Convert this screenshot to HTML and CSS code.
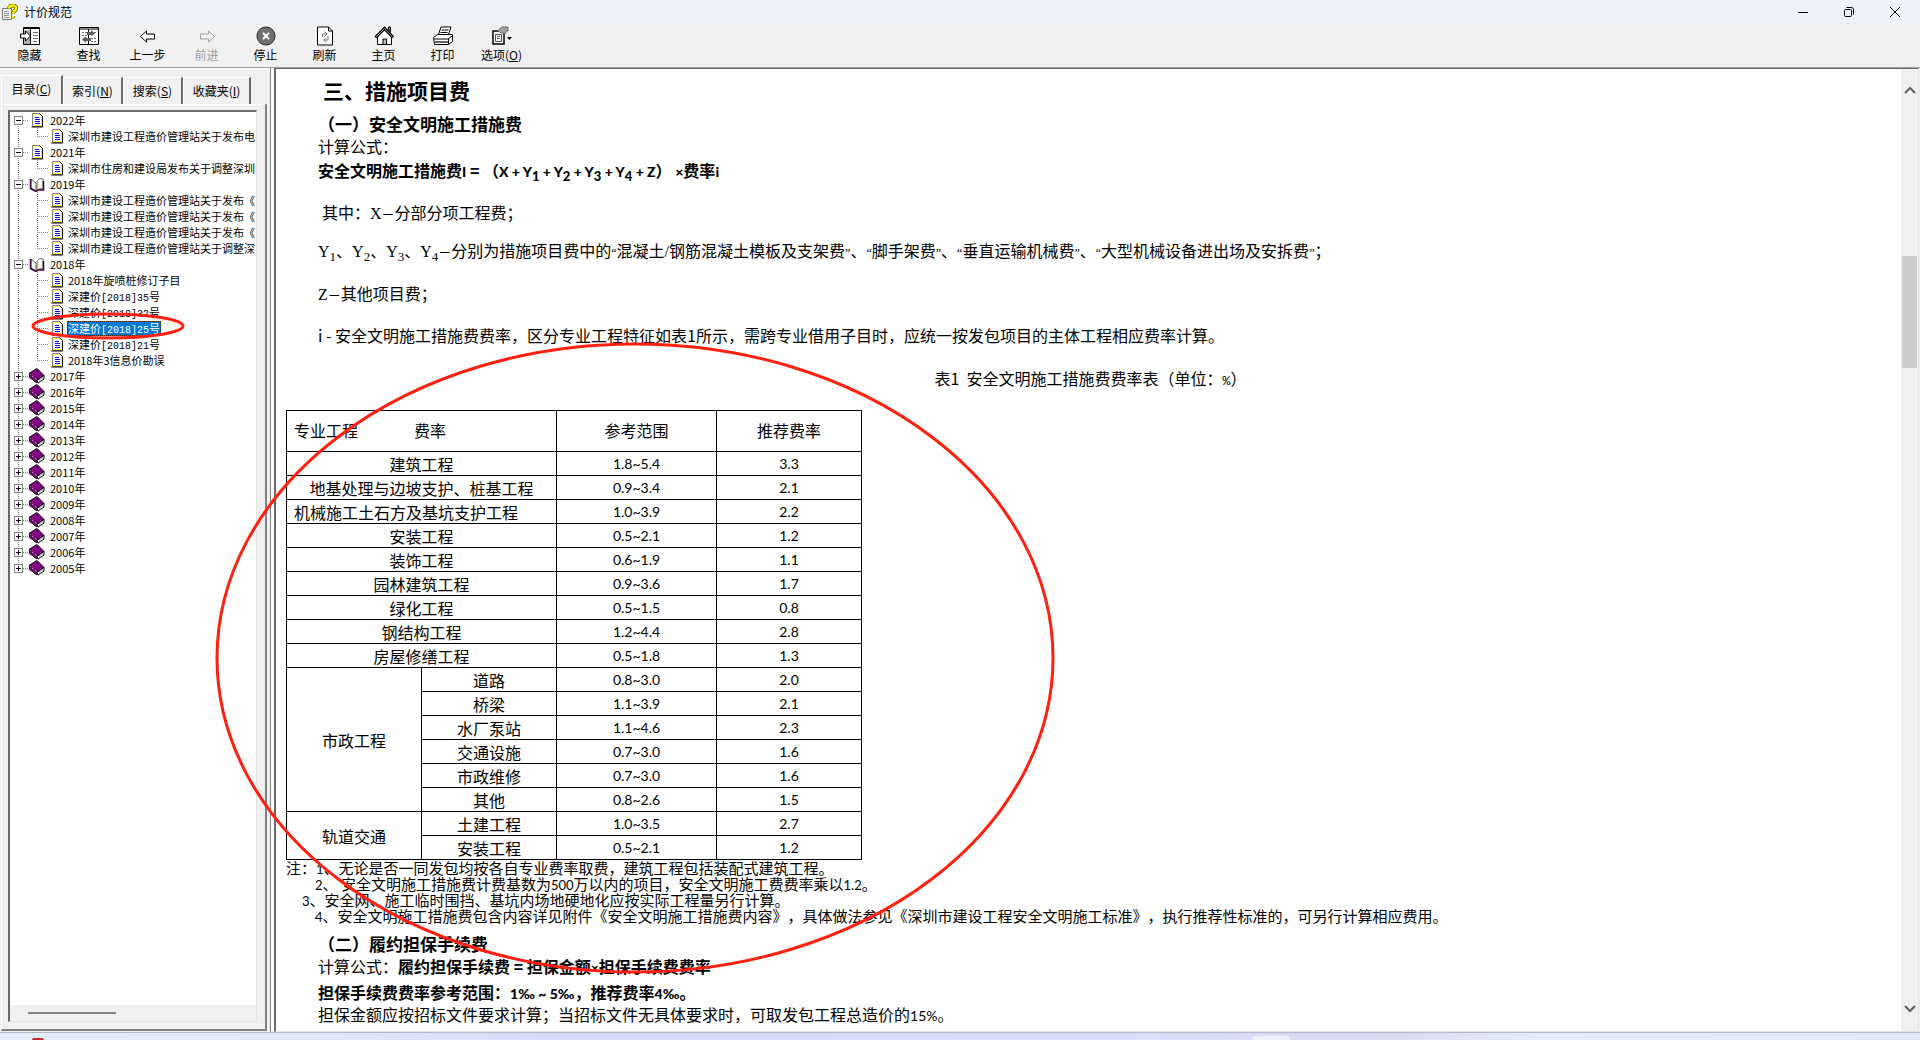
FILE: index.html
```html
<!DOCTYPE html>
<html lang="zh-CN">
<head>
<meta charset="utf-8">
<title>计价规范</title>
<link rel="stylesheet" href="styles.css">
</head>
<body>
<svg class="sprite" aria-hidden="true">
  <symbol id="page" viewBox="0 0 16 16">
    <path d="M3.500 1.500h7l3 3v10h-10z" fill="#fff" stroke="#808080"/>
    <path d="M4.500 2.500h6l2 2v9h-8z" fill="none" stroke="#ffff40"/>
    <path d="M10.500 1.500l3 3v10.500h-11" fill="none" stroke="#000"/>
    <path d="M6 5.500h4M6 7.500h5M6 9.500h5M6 11.500h5" stroke="#0000e0"/>
  </symbol>
  <symbol id="open" viewBox="0 0 16 16">
    <path d="M2 3l5 4v8l-5-3z" fill="#fff" stroke="#606060"/>
    <path d="M8 6c1-3 3-4 6-3v10c-3-1-5 0-6 2z" fill="#fff" stroke="#606060"/>
    <path d="M9.500 6v6M12.500 5v7" stroke="#f0e860" stroke-dasharray="1 1"/>
    <path d="M1.500 3v9.500L7 15.500l2-1.500h5.500V5" fill="none" stroke="#400040" stroke-width="1.500"/>
  </symbol>
  <symbol id="book" viewBox="0 0 16 16">
    <path d="M0 5.500L8 .5l7 7-7 5z" fill="#800080" stroke="#000"/>
    <path d="M8 12.500l7-5v3.500l-6 4z" fill="#fff" stroke="#000"/>
    <path d="M0 5.500v3.500l8 6v-3z" fill="#800080" stroke="#000"/>
    <path d="M1.500 6.500l7 6" stroke="#fff" stroke-dasharray="1 1"/>
    <path d="M10 12.500l4-2.500M10 14l4-2.500" stroke="#808080" stroke-dasharray="1 1"/>
  </symbol>
</svg>

<div class="app">
  <header class="titlebar">
    <svg class="app-icon" viewBox="0 0 16 16"><path d="M.5 4.500h9v11h-9z" fill="#fff" stroke="#707070"/><path d="M2 7.500h5M2 9.500h5M2 11.500h5M2 13.500h5" stroke="#909090"/><path d="M7 4.500C7 .5 14.500.5 14 4.500c0 2.500-3 2-3 5M11 12v2.500" fill="none" stroke="#606000" stroke-width="4"/><path d="M7 4.500C7 .5 14.500.5 14 4.500c0 2.500-3 2-3 5M11 12v2.500" fill="none" stroke="#ffee00" stroke-width="2.500"/></svg>
    <h1>计价规范</h1>
    <div class="window-buttons">
      <button aria-label="最小化"><svg viewBox="0 0 10 10"><path d="M0 5.500h10"/></svg></button>
      <button aria-label="还原"><svg viewBox="0 0 10 10"><rect x=".5" y="2.500" width="7" height="7" rx="1"/><path d="M2.500.5h5q2 0 2 2v5"/></svg></button>
      <button aria-label="关闭"><svg viewBox="0 0 10 10"><path d="M0 0l10 10M10 0L0 10"/></svg></button>
    </div>
  </header>

  <nav class="toolbar">
    <button><svg viewBox="0 0 20 20"><path d="M3.500 1.500h16v17h-16z" fill="#fff" stroke="#000"/><path d="M4 4h6v14H4z" fill="#b0b0b0"/><path d="M3 2.500h17M10.500 3v16" stroke="#000"/><path d="M13 6.500h5M13 9.500h5M13 12.500h5M13 15.500h4" stroke="#707070"/><path d="M.5 8h5V5l5 5-5 5v-3h-5z" fill="#fff" stroke="#000"/></svg>隐藏</button>
    <button><svg viewBox="0 0 20 20"><path d="M.5 1.500h19v17H.5z" fill="#fff" stroke="#000"/><path d="M0 3h20M9.500 3v16" stroke="#000"/><path d="M3 6.500h5M3 9.500h5M12 12.500h6M12 15.500h5M12 6.500h6" stroke="#707070" stroke-dasharray="2 1"/><path d="M8 6h4V4l4 3.500-4 3V9H8zM12 12H7v-2l-4 3.500L7 17v-2h5z" fill="#606060"/></svg>查找</button>
    <button><svg viewBox="0 0 20 20"><path d="M2.500 10.500l6-5.500v3h8v5h-8v3z" fill="#fff" stroke="#000"/></svg>上一步</button>
    <button disabled><svg viewBox="0 0 20 20"><path d="M17.500 10.500l-6-5.500v3h-8v5h8v3z" fill="#f4f4f4" stroke="#a0a0a0"/></svg>前进</button>
    <button><svg viewBox="0 0 20 20"><circle cx="10" cy="10" r="9" fill="#707070" stroke="#202020"/><path d="M7 7l6 6M13 7l-6 6" stroke="#fff" stroke-width="2"/></svg>停止</button>
    <button><svg viewBox="0 0 20 20"><path d="M2.500 1h11l4 4v14h-15z" fill="#fff" stroke="#000"/><path d="M13.500 1v4h4" fill="none" stroke="#000"/><path d="M7.500 11V8h4M9.500 5.500L12 8l-2.500 2.500M13 10v4H9M11 11.500L8.500 14l2.500 2.500" fill="none" stroke="#707070"/></svg>刷新</button>
    <button><svg viewBox="0 0 20 20"><path d="M14.500 6V1h2v8" fill="#808080" stroke="#000"/><path d="M3.500 10v8.500h14V10L10 3z" fill="#fff" stroke="#000"/><path d="M1.500 11.500L10.500 2.500l8.500 9" fill="none" stroke="#000" stroke-width="3"/><path d="M2 11l8.500-8.500L18.500 11" fill="none" stroke="#a0a0a0"/><path d="M9 18v-5h3.500v5" fill="#bbb" stroke="#000"/></svg>主页</button>
    <button><svg viewBox="0 0 20 20"><path d="M5 10l3-9h10l-3 9z" fill="#fff" stroke="#000"/><path d="M8.500 4h7M7.500 6.500h7M7 8.500h6" stroke="#000"/><path d="M.5 11.500l4-3h15v7l-4 3H1.500z" fill="#fff" stroke="#000"/><path d="M1 13h14l4-3M15.500 13v5" fill="none" stroke="#000"/><path d="M2 16h13" stroke="#606060" stroke-width="2"/></svg>打印</button>
    <button><svg viewBox="0 0 20 20"><path d="M1 5h11v13H1z" fill="#fff" stroke="#000" stroke-width="1.500"/><path d="M3.500 8.500h6v7h-6zM5 10.500h3M5 12.500h3" fill="none" stroke="#505050"/><path d="M5 5l5-4h6v4l-4 3z" fill="#a0a0a0" stroke="#404040" stroke-dasharray="2 1"/><path d="M15 11h5l-2.500 3z" fill="#000"/></svg><span>选项(<u>O</u>)</span></button>
  </nav>

  <main class="workspace">
    <aside class="side">
      <div class="tabs">
        <button class="active">目录(<u>C</u>)</button><button>索引(<u>N</u>)</button><button>搜索(<u>S</u>)</button><button>收藏夹(<u>I</u>)</button>
      </div>
      <div class="tab-page">
        <div class="tree-box">
          <ul class="tree">
            <li><div class="row"><button aria-label="折叠"></button><i></i><svg><use href="#page"/></svg><span>2022年</span></div>
              <ul><li class="row"><i></i><svg><use href="#page"/></svg><span>深圳市建设工程造价管理站关于发布电</span></li></ul></li>
            <li><div class="row"><button aria-label="折叠"></button><i></i><svg><use href="#page"/></svg><span>2021年</span></div>
              <ul><li class="row"><i></i><svg><use href="#page"/></svg><span>深圳市住房和建设局发布关于调整深圳</span></li></ul></li>
            <li><div class="row"><button aria-label="折叠"></button><i></i><svg><use href="#open"/></svg><span>2019年</span></div>
              <ul>
                <li class="row"><i></i><svg><use href="#page"/></svg><span>深圳市建设工程造价管理站关于发布《</span></li>
                <li class="row"><i></i><svg><use href="#page"/></svg><span>深圳市建设工程造价管理站关于发布《</span></li>
                <li class="row"><i></i><svg><use href="#page"/></svg><span>深圳市建设工程造价管理站关于发布《</span></li>
                <li class="row"><i></i><svg><use href="#page"/></svg><span>深圳市建设工程造价管理站关于调整深</span></li>
              </ul></li>
            <li><div class="row"><button aria-label="折叠"></button><i></i><svg><use href="#open"/></svg><span>2018年</span></div>
              <ul>
                <li class="row"><i></i><svg><use href="#page"/></svg><span>2018年旋喷桩修订子目</span></li>
                <li class="row"><i></i><svg><use href="#page"/></svg><span>深建价<code>[2018]35</code>号</span></li>
                <li class="row"><i></i><svg><use href="#page"/></svg><span>深建价<code>[2018]32</code>号</span></li>
                <li class="row"><i></i><svg><use href="#page"/></svg><span class="selected">深建价<code>[2018]25</code>号</span></li>
                <li class="row"><i></i><svg><use href="#page"/></svg><span>深建价<code>[2018]21</code>号</span></li>
                <li class="row"><i></i><svg><use href="#page"/></svg><span>2018年3信息价勘误</span></li>
              </ul></li>
            <li class="row"><button class="closed" aria-label="展开"></button><i></i><svg><use href="#book"/></svg><span>2017年</span></li>
            <li class="row"><button class="closed" aria-label="展开"></button><i></i><svg><use href="#book"/></svg><span>2016年</span></li>
            <li class="row"><button class="closed" aria-label="展开"></button><i></i><svg><use href="#book"/></svg><span>2015年</span></li>
            <li class="row"><button class="closed" aria-label="展开"></button><i></i><svg><use href="#book"/></svg><span>2014年</span></li>
            <li class="row"><button class="closed" aria-label="展开"></button><i></i><svg><use href="#book"/></svg><span>2013年</span></li>
            <li class="row"><button class="closed" aria-label="展开"></button><i></i><svg><use href="#book"/></svg><span>2012年</span></li>
            <li class="row"><button class="closed" aria-label="展开"></button><i></i><svg><use href="#book"/></svg><span>2011年</span></li>
            <li class="row"><button class="closed" aria-label="展开"></button><i></i><svg><use href="#book"/></svg><span>2010年</span></li>
            <li class="row"><button class="closed" aria-label="展开"></button><i></i><svg><use href="#book"/></svg><span>2009年</span></li>
            <li class="row"><button class="closed" aria-label="展开"></button><i></i><svg><use href="#book"/></svg><span>2008年</span></li>
            <li class="row"><button class="closed" aria-label="展开"></button><i></i><svg><use href="#book"/></svg><span>2007年</span></li>
            <li class="row"><button class="closed" aria-label="展开"></button><i></i><svg><use href="#book"/></svg><span>2006年</span></li>
            <li class="row"><button class="closed" aria-label="展开"></button><i></i><svg><use href="#book"/></svg><span>2005年</span></li>
          </ul>
          <div class="hscroll"><div class="hthumb"></div></div>
        </div>
      </div>
    </aside>
    <div class="splitter"></div>
    <section class="viewer">
      <article class="doc">
        <h2>三、措施项目费</h2>
        <h3>（一）安全文明施工措施费</h3>
        <p class="song">计算公式：</p>
        <p class="formula">安全文明施工措施费<b class="lat">I</b> =&nbsp;（<b class="lat">X + Y<sub>1</sub> + Y<sub>2</sub> + Y<sub>3</sub> + Y<sub>4</sub> + Z</b>）&nbsp;<b class="lat">×</b>费率<b class="lat">i</b></p>
        <p class="song where">&nbsp;其中：X<span class="dash">－</span>分部分项工程费；</p>
        <p class="song ydef">Y<sub>1</sub>、Y<sub>2</sub>、Y<sub>3</sub>、Y<sub>4</sub><span class="dash">－</span>分别为措施项目费中的<span class="quote">“</span>混凝土/钢筋混凝土模板及支架费<span class="quote">”</span>、<span class="quote">“</span>脚手架费<span class="quote">”</span>、<span class="quote">“</span>垂直运输机械费<span class="quote">”</span>、<span class="quote">“</span>大型机械设备进出场及安拆费<span class="quote">”</span>；</p>
        <p class="song zdef">Z<span class="dash">－</span>其他项目费；</p>
        <p class="idef">i - 安全文明施工措施费费率，区分专业工程特征如表1所示，需跨专业借用子目时，应统一按发包项目的主体工程相应费率计算。</p>
        <p class="caption" id="cap">表1&nbsp; 安全文明施工措施费费率表（单位：<span class="percent">%</span>）</p>
        <table class="rates" aria-labelledby="cap">
          <colgroup><col class="c1"><col class="c1"><col class="c2"><col class="c3"></colgroup>
          <tr class="head"><th colspan="2"><div class="split-head"><span>专业工程</span><span>费率</span></div></th><th>参考范围</th><th>推荐费率</th></tr>
          <tr><td colspan="2">建筑工程</td><td class="num">1.8~5.4</td><td class="num">3.3</td></tr>
          <tr><td colspan="2">地基处理与边坡支护、桩基工程</td><td class="num">0.9~3.4</td><td class="num">2.1</td></tr>
          <tr><td colspan="2" class="left">机械施工土石方及基坑支护工程</td><td class="num">1.0~3.9</td><td class="num">2.2</td></tr>
          <tr><td colspan="2">安装工程</td><td class="num">0.5~2.1</td><td class="num">1.2</td></tr>
          <tr><td colspan="2">装饰工程</td><td class="num">0.6~1.9</td><td class="num">1.1</td></tr>
          <tr><td colspan="2">园林建筑工程</td><td class="num">0.9~3.6</td><td class="num">1.7</td></tr>
          <tr><td colspan="2">绿化工程</td><td class="num">0.5~1.5</td><td class="num">0.8</td></tr>
          <tr><td colspan="2">钢结构工程</td><td class="num">1.2~4.4</td><td class="num">2.8</td></tr>
          <tr><td colspan="2">房屋修缮工程</td><td class="num">0.5~1.8</td><td class="num">1.3</td></tr>
          <tr><td rowspan="6">市政工程</td><td>道路</td><td class="num">0.8~3.0</td><td class="num">2.0</td></tr>
          <tr><td>桥梁</td><td class="num">1.1~3.9</td><td class="num">2.1</td></tr>
          <tr><td>水厂泵站</td><td class="num">1.1~4.6</td><td class="num">2.3</td></tr>
          <tr><td>交通设施</td><td class="num">0.7~3.0</td><td class="num">1.6</td></tr>
          <tr><td>市政维修</td><td class="num">0.7~3.0</td><td class="num">1.6</td></tr>
          <tr><td>其他</td><td class="num">0.8~2.6</td><td class="num">1.5</td></tr>
          <tr><td rowspan="2">轨道交通</td><td>土建工程</td><td class="num">1.0~3.5</td><td class="num">2.7</td></tr>
          <tr><td>安装工程</td><td class="num">0.5~2.1</td><td class="num">1.2</td></tr>
        </table>
        <div class="notes">
          <p>注：<span class="lat">1</span>、无论是否一同发包均按各自专业费率取费，建筑工程包括装配式建筑工程。</p>
          <p class="in2"><span class="lat">2</span>、&nbsp;安全文明施工措施费计费基数为<span class="lat">500</span>万以内的项目，安全文明施工费费率乘以<span class="lat">1.2</span>。</p>
          <p class="in1"><span class="lat">3</span>、安全网、施工临时围挡、基坑内场地硬地化应按实际工程量另行计算。</p>
          <p class="in2"><span class="lat">4</span>、安全文明施工措施费包含内容详见附件《安全文明施工措施费内容》，具体做法参见《深圳市建设工程安全文明施工标准》，执行推荐性标准的，可另行计算相应费用。</p>
        </div>
        <h3>（二）履约担保手续费</h3>
        <p class="song">计算公式：<b class="yahei">履约担保手续费 = 担保金额<span class="lat">×</span>担保手续费费率</b></p>
        <p class="bold">担保手续费费率参考范围：<b class="lat">1‰ ~ 5‰</b>，推荐费率<b class="lat">4‰</b>。</p>
        <p class="song">担保金额应按招标文件要求计算；当招标文件无具体要求时，可取发包工程总造价的<span class="lat">15%</span>。</p>
      </article>
      <div class="vscroll">
        <svg class="up" viewBox="0 0 12 10"><path d="M1 8l5-5 5 5"/></svg>
        <div class="vthumb"></div>
        <svg class="down" viewBox="0 0 12 10"><path d="M1 2l5 5 5-5"/></svg>
      </div>
    </section>
  </main>
  <footer class="taskbar"><span class="badge"></span><span class="task"></span></footer>
</div>
<svg class="marks" aria-hidden="true"><ellipse cx="108" cy="326" rx="75" ry="12"/><ellipse cx="635" cy="658" rx="418" ry="314"/></svg>
</body>
</html>
```
FILE: styles.css
```css
* { box-sizing: border-box; }
body, h1, h2, h3, p, ul { margin: 0; padding: 0; }
body { font-family: "Noto Sans CJK SC", sans-serif; font-size: 12px; color: #000; overflow: hidden; text-spacing-trim: space-all; }
button { font: inherit; color: inherit; background: none; border: 0; padding: 0; }
ul { list-style: none; }
.sprite { display: none; }
.app { display: flex; flex-direction: column; height: 100vh; background: #f0f0f0; }

.titlebar { display: flex; align-items: center; height: 23px; background: #eef3fb; padding-left: 2px; flex: none; }
.app-icon { width: 16px; height: 16px; margin-right: 6px; }
.titlebar h1 { font-size: 12px; font-weight: 400; line-height: 20px; }
.window-buttons { display: flex; margin-left: auto; padding-right: 2px; height: 100%; }
.window-buttons button { width: 46px; display: flex; align-items: center; justify-content: center; }
.window-buttons svg { width: 10px; height: 10px; fill: none; stroke: #000; }

.toolbar { display: flex; flex: none; height: 45px; padding-top: 3px; border-bottom: 1px solid #a0a0a0; }
.toolbar button { width: 59px; display: flex; flex-direction: column; align-items: center; line-height: 18px; }
.toolbar svg { width: 20px; height: 20px; flex: none; }
.toolbar button:disabled { color: #a0a0a0; }

.workspace { flex: 1; display: flex; min-height: 0; }
.side { width: 270px; flex: none; display: flex; flex-direction: column; padding: 7px 3px 1px 1px; border-top: 1px solid #fff; }
.tabs { display: flex; align-items: flex-end; height: 28px; flex: none; }
.tabs button { width: 60px; height: 27px; padding-bottom: 2px; border: 1px solid #fff; border-right: 2px solid #696969; border-bottom: 0; }
.tabs button:last-child { width: 68px; }
.tabs .active { width: 62px; height: 29px; padding-bottom: 4px; }
.tab-page { flex: 1; min-height: 0; border: 1px solid #fff; border-right: 2px solid #808080; border-bottom: 2px solid #808080; padding: 5px 8px 7px 6px; display: flex; }
.tree-box { flex: 1; min-width: 0; display: flex; flex-direction: column; background: #fff; border: 1px solid #e3e3e3; border-left: 2px solid #696969; border-top: 2px solid #696969; overflow: hidden; }
.tree { flex: 1; min-height: 0; font-size: 11px; background: repeating-linear-gradient(#808080 0 1px, transparent 1px 2px) 8px 8px / 1px 449px no-repeat; }
.tree ul { background: repeating-linear-gradient(#808080 0 1px, transparent 1px 2px) 27px 0 / 1px calc(100% - 8px) no-repeat; padding-left: 27px; }
.row { display: flex; align-items: center; height: 16px; white-space: nowrap; }
.row button { width: 9px; height: 9px; margin-left: 4px; border: 1px solid #808080; flex: none; background: linear-gradient(#000, #000) center / 5px 1px no-repeat #fff; }
.row .closed { background: linear-gradient(#000, #000) center / 5px 1px no-repeat, linear-gradient(#000, #000) center / 1px 5px no-repeat #fff; }
.row i { width: 6px; height: 1px; flex: none; background: repeating-linear-gradient(90deg, #808080 0 1px, transparent 1px 2px); }
.row svg { width: 16px; height: 16px; flex: none; margin-right: 4px; }
.row span { line-height: 15px; padding: 0 1px; }
.row code { font-family: "Liberation Mono", monospace; font-size: 10px; line-height: 0; }
.tree ul .row i { width: 12px; }
.tree ul .row svg { margin-right: 2px; }
.row .selected { background: #0078d7; color: #fff; outline: 1px dotted #402000; outline-offset: -1px; }
.hscroll { height: 16px; flex: none; background: #f0f0f0; padding: 7px 18px; }
.hthumb { width: 88px; height: 2px; background: #858585; }
.splitter { width: 4px; flex: none; border-left: 1px solid #808080; background: #fff; }

.viewer { flex: 1; min-width: 0; display: flex; background: #fff; border-left: 2px solid #696969; border-top: 1px solid #696969; border-right: 1px solid #e3e3e3; border-bottom: 1px solid #e3e3e3; margin-right: 1px; }
.doc { flex: 1; min-width: 0; overflow: hidden; padding: 7px 0 0 10px; font-size: 16px; line-height: 24px; }
.doc > h2, .doc > h3, .doc > p { padding-left: 32px; }
.doc h2 { font-size: 21px; line-height: 28px; }
.doc > h2 { padding-left: 37px; }
.doc h3 { font-size: 17px; line-height: 24px; margin-top: 8px; }
.song { font-family: "Liberation Serif", "Noto Sans CJK SC", serif; font-weight: 400; }
.lat { font-family: Lato, sans-serif; font-size: 14px; line-height: 0; }
.dash { font-size: 13px; line-height: 0; }
.quote { font-size: 12px; line-height: 0; }
.percent { font-family: "Liberation Mono", monospace; font-size: 13px; line-height: 0; }
.doc sub { font-size: 13px; line-height: 0; }
.formula { font-weight: 700; line-height: 20px; }
.bold { font-weight: 700; }
.yahei { font-family: "Noto Sans CJK SC", sans-serif; line-height: 0; }
.where { margin-top: 22px; }
.ydef { margin-top: 14px; }
.zdef { margin-top: 19px; }
.idef { margin-top: 16px; }
.doc > .caption { margin-top: 19px; text-align: center; padding: 0 6px 0 0; }
.rates { margin-top: 20px; border-collapse: collapse; table-layout: fixed; width: 576px; line-height: 22px; }
.c1 { width: 135px; }
.c2 { width: 160px; }
.c3 { width: 145px; }
.rates td, .rates th { border: 1px solid #000; padding: 0 7px; height: 24px; text-align: center; font-weight: 400; }
.rates .head th { height: 41px; padding-bottom: 3px; }
.rates .left { text-align: left; }
.rates .num { font-family: Lato, sans-serif; font-size: 14px; }
.split-head { display: flex; gap: 56px; }
.notes { font-size: 15px; line-height: 16px; }
.notes .lat { font-size: 13px; }
.notes .in1 { padding-left: 16px; }
.notes .in2 { padding-left: 29px; }

.vscroll { width: 17px; flex: none; background: #f0f0f0; display: flex; flex-direction: column; align-items: center; padding: 16px 0 17px; }
.vscroll svg { width: 12px; height: 10px; fill: none; stroke: #606060; stroke-width: 2; }
.vthumb { width: 15px; height: 112px; margin-top: 161px; background: #cdcdcd; }
.vscroll .down { margin-top: auto; }

.taskbar { height: 8px; flex: none; display: flex; align-items: flex-end; overflow: hidden; border-top: 1px solid #b4b8c4; background: linear-gradient(90deg, #e2edf8 0%, #dfeaf8 15%, #d2dcf8 30%, #d6e0f8 60%, #d8daf0 72%, #e2edf8 80%, #deeaf8 100%); }
.badge { width: 12px; height: 2px; margin-left: 32px; border-radius: 6px 6px 0 0; background: #c03030; }
.task { width: 38px; height: 4px; margin-left: 1208px; border-radius: 4px 4px 0 0; background: #eef3fb; }
.marks { position: absolute; left: 0; top: 0; width: 1920px; height: 1040px; pointer-events: none; fill: none; stroke: #ff2010; stroke-width: 3; }
```
